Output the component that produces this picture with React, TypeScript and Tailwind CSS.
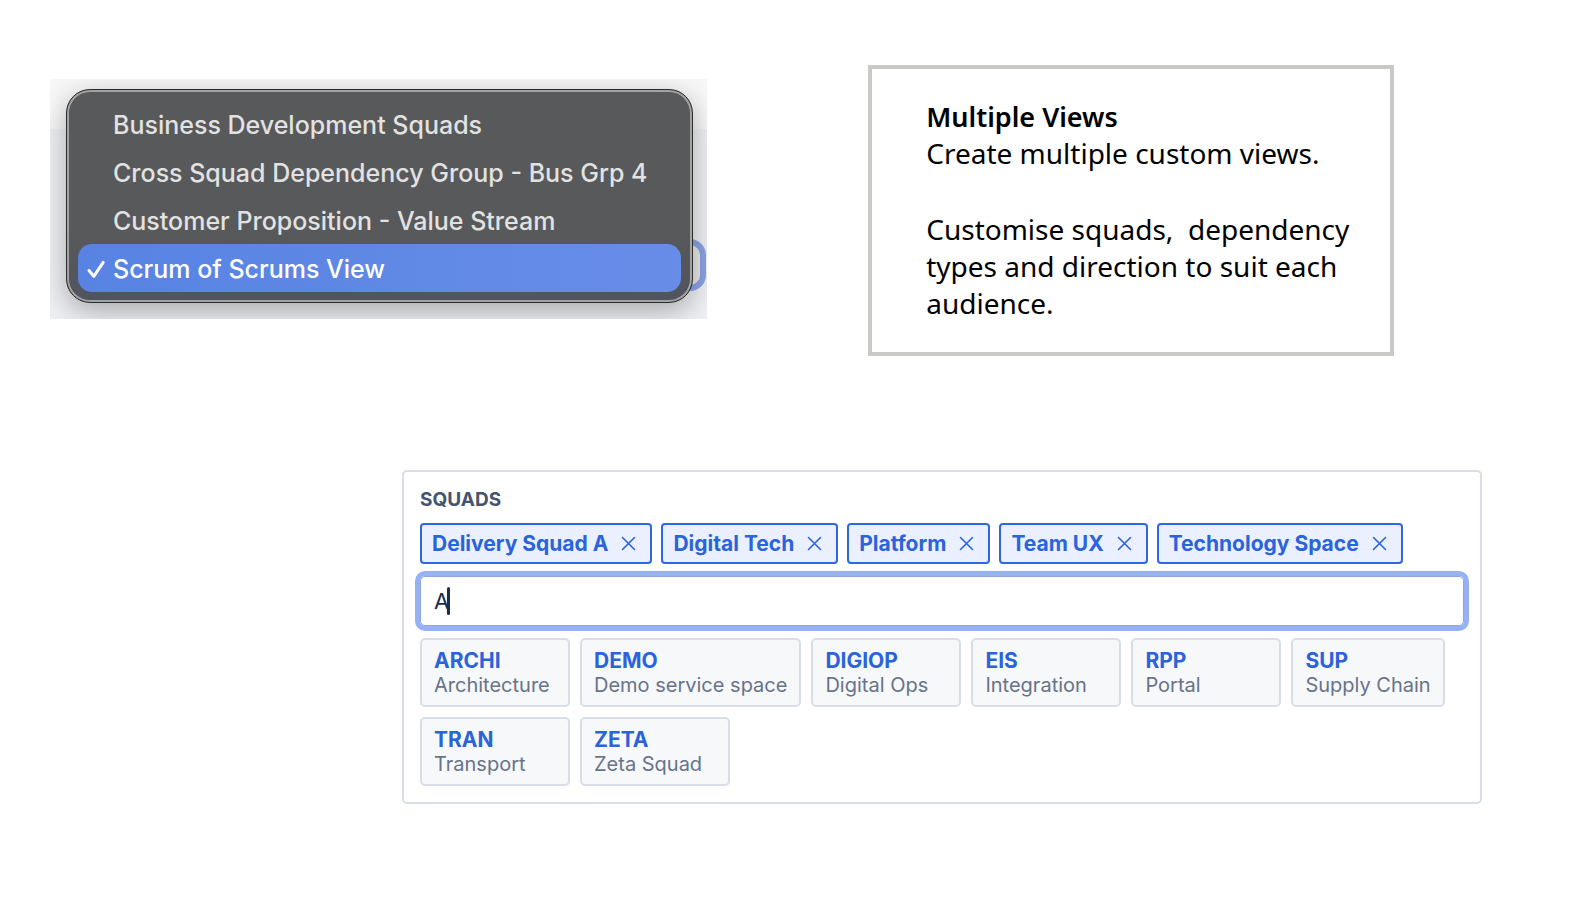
import React, { useState } from 'react';
import { clsx } from 'clsx';

interface Squad {
  code: string;
  name: string;
}

const views = [
  'Business Development Squads',
  'Cross Squad Dependency Group - Bus Grp 4',
  'Customer Proposition - Value Stream',
  'Scrum of Scrums View'
];

const initialSquads = ['Delivery Squad A', 'Digital Tech', 'Platform', 'Team UX', 'Technology Space'];

const suggestions: Squad[] = [
  { code: 'ARCHI', name: 'Architecture' },
  { code: 'DEMO', name: 'Demo service space' },
  { code: 'DIGIOP', name: 'Digital Ops' },
  { code: 'EIS', name: 'Integration' },
  { code: 'RPP', name: 'Portal' },
  { code: 'SUP', name: 'Supply Chain' },
  { code: 'TRAN', name: 'Transport' },
  { code: 'ZETA', name: 'Zeta Squad' }
];

function ViewMenu() {
  const [selected, setSelected] = useState(views[3]);

  return (
    <section className="relative overflow-hidden bg-linear-to-b from-[#f7f7f7] from-[50px] to-[#eff0f3] to-[50px] pt-[10px] pr-[14px] pb-4 pl-4">
      {/* Focused select behind the open menu */}
      <select
        aria-label="View"
        value={selected}
        onChange={e => setSelected(e.target.value)}
        className="absolute right-[7px] bottom-[34px] h-10 w-60 appearance-none rounded-[10px] bg-[#e9e9e9] text-transparent outline-[6px] outline-[#8aa5e6]"
      >
        {views.map(view => (
          <option key={view}>{view}</option>
        ))}
      </select>

      <ul className="relative rounded-[24px] border border-[#2c2c2c] bg-linear-to-b from-[#58595a] from-65% to-[#50545f] px-[11px] py-[10px] shadow-[inset_0_0_0_2px_#a3a3a3,0_8px_28px_rgba(0,0,0,0.3)]">
        {views.map(view => (
          <li key={view}>
            <button
              type="button"
              onClick={() => setSelected(view)}
              className={clsx(
                'flex h-12 w-full items-center rounded-[14px] pt-[3px] text-left text-[25px] font-medium whitespace-nowrap',
                view === selected
                  ? 'bg-linear-to-r from-[#5883e3] to-[#678de8] text-white'
                  : 'text-[#e2e2e2]'
              )}
            >
              <span className="flex w-[35px] shrink-0 justify-center">
                {view === selected && (
                  <svg width="20" height="20" viewBox="0 0 20 20" fill="none" stroke="currentColor" strokeWidth="3" strokeLinecap="round" strokeLinejoin="round">
                    <path d="M3 10.5 7.8 16.4 17.2 2.4" />
                  </svg>
                )}
              </span>
              {view}
            </button>
          </li>
        ))}
      </ul>
    </section>
  );
}

function InfoCard() {
  return (
    <article className="-mt-[14px] border-4 border-[#c9cac5] pt-[29px] pr-8 pb-[30px] pl-[54px] font-['Noto_Sans',sans-serif] text-[28px] leading-[37px] text-black">
      <h2 className="text-[27px] font-semibold">Multiple Views</h2>
      <p>Create multiple custom views.</p>
      <p className="mt-[39px] whitespace-pre-wrap">
        {'Customise squads,  dependency types and direction to suit each audience.'}
      </p>
    </article>
  );
}

function SquadPicker() {
  const [squads, setSquads] = useState(initialSquads);
  const [query, setQuery] = useState('A');

  return (
    <section className="mt-[114px] mr-[94px] ml-[402px] rounded-[5px] border-2 border-[#d9dde7] px-4 py-4">
      <label htmlFor="squad-search" className="block text-[19px] leading-6 font-bold text-[#44546f]">
        SQUADS
      </label>

      <div className="mt-[11px] flex flex-wrap gap-[9px]">
        {squads.map(squad => (
          <span
            key={squad}
            className="flex h-[41px] items-center gap-[13px] rounded-[4px] border-2 border-[#2f68de] bg-[#eaf0ff] pr-[14px] pl-[10px] text-[21px] font-bold text-[#2b63dc]"
          >
            {squad}
            <button type="button" aria-label={`Remove ${squad}`} onClick={() => setSquads(squads.filter(s => s !== squad))}>
              <svg width="15" height="15" viewBox="0 0 15 15" fill="none" stroke="currentColor" strokeWidth="1.6" strokeLinecap="round">
                <path d="M1.5 1.5l12 12M13.5 1.5l-12 12" />
              </svg>
            </button>
          </span>
        ))}
      </div>

      <div className="relative mt-3">
        <input
          id="squad-search"
          type="text"
          value={query}
          onChange={e => setQuery(e.target.value)}
          className="block h-[50px] w-full rounded-[5px] border border-[#8aa4e4] bg-white px-[13px] text-[22px] text-[#172b4d] caret-transparent outline-[5px] outline-[#96b1f5]"
        />
        {/* Text cursor */}
        <span className="absolute top-[11px] left-[27px] h-7 w-[3px] rounded-full bg-[#1c2b50]" />
      </div>

      <div className="mt-3 flex flex-wrap gap-[10px]">
        {suggestions.map(squad => (
          <button
            key={squad.code}
            type="button"
            onClick={() => setSquads([...squads, squad.name])}
            className="min-w-[150px] rounded-[5px] border-2 border-[#d9dde7] bg-[#f7f8fa] px-3 pt-[9px] pb-2 text-left text-[20px] leading-6"
          >
            <span className="block text-[21px] font-bold text-[#2b63dc]">{squad.code}</span>
            <span className="block text-[#677389]">{squad.name}</span>
          </button>
        ))}
      </div>
    </section>
  );
}

export default function App() {
  return (
    <main className="min-h-screen bg-white pt-[79px] pb-16 font-['Inter',sans-serif]">
      <div className="grid grid-cols-[5fr_4fr] items-start gap-[161px] pr-[182px] pl-[50px]">
        <ViewMenu />
        <InfoCard />
      </div>
      <SquadPicker />
    </main>
  );
}
